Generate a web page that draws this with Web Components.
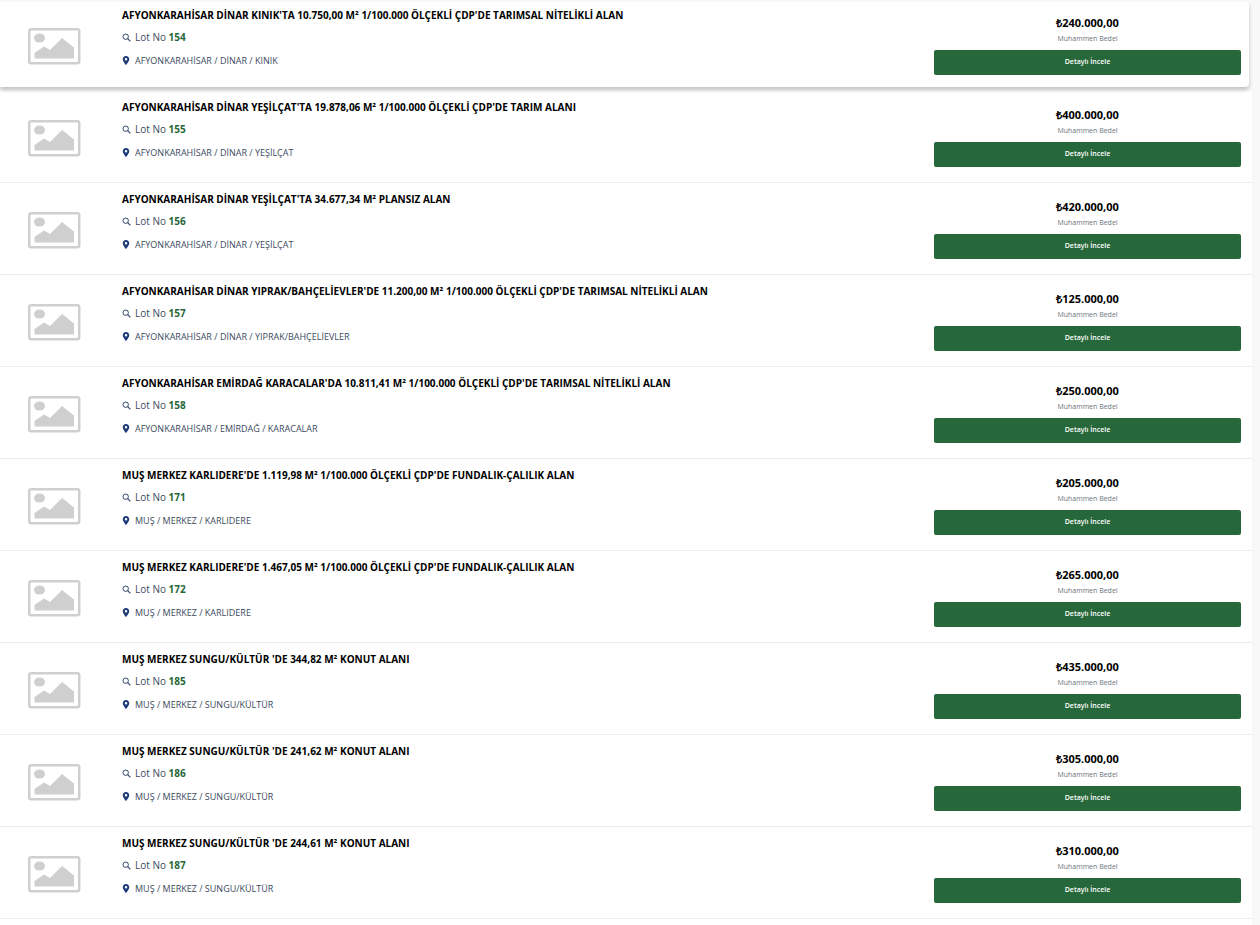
<!DOCTYPE html>
<html lang="tr">
<head>
<meta charset="utf-8">
<title>Lot listesi</title>
<style>
  html, body { margin: 0; background: #f8f8f8; height: 925px; overflow: hidden; }
  body { font-family: "Open Sans", sans-serif; }
</style>
</head>
<body>
<lot-list>
  <lot-row active lot="154" price="240.000,00" place="AFYONKARAHİSAR / DİNAR / KINIK">AFYONKARAHİSAR DİNAR KINIK'TA 10.750,00 M² 1/100.000 ÖLÇEKLİ ÇDP'DE TARIMSAL NİTELİKLİ ALAN</lot-row>
  <lot-row lot="155" price="400.000,00" place="AFYONKARAHİSAR / DİNAR / YEŞİLÇAT">AFYONKARAHİSAR DİNAR YEŞİLÇAT'TA 19.878,06 M² 1/100.000 ÖLÇEKLİ ÇDP'DE TARIM ALANI</lot-row>
  <lot-row lot="156" price="420.000,00" place="AFYONKARAHİSAR / DİNAR / YEŞİLÇAT">AFYONKARAHİSAR DİNAR YEŞİLÇAT'TA 34.677,34 M² PLANSIZ ALAN</lot-row>
  <lot-row lot="157" price="125.000,00" place="AFYONKARAHİSAR / DİNAR / YIPRAK/BAHÇELİEVLER">AFYONKARAHİSAR DİNAR YIPRAK/BAHÇELİEVLER'DE 11.200,00 M² 1/100.000 ÖLÇEKLİ ÇDP'DE TARIMSAL NİTELİKLİ ALAN</lot-row>
  <lot-row lot="158" price="250.000,00" place="AFYONKARAHİSAR / EMİRDAĞ / KARACALAR">AFYONKARAHİSAR EMİRDAĞ KARACALAR'DA 10.811,41 M² 1/100.000 ÖLÇEKLİ ÇDP'DE TARIMSAL NİTELİKLİ ALAN</lot-row>
  <lot-row lot="171" price="205.000,00" place="MUŞ / MERKEZ / KARLIDERE">MUŞ MERKEZ KARLIDERE'DE 1.119,98 M² 1/100.000 ÖLÇEKLİ ÇDP'DE FUNDALIK-ÇALILIK ALAN</lot-row>
  <lot-row lot="172" price="265.000,00" place="MUŞ / MERKEZ / KARLIDERE">MUŞ MERKEZ KARLIDERE'DE 1.467,05 M² 1/100.000 ÖLÇEKLİ ÇDP'DE FUNDALIK-ÇALILIK ALAN</lot-row>
  <lot-row lot="185" price="435.000,00" place="MUŞ / MERKEZ / SUNGU/KÜLTÜR">MUŞ MERKEZ SUNGU/KÜLTÜR 'DE 344,82 M² KONUT ALANI</lot-row>
  <lot-row lot="186" price="305.000,00" place="MUŞ / MERKEZ / SUNGU/KÜLTÜR">MUŞ MERKEZ SUNGU/KÜLTÜR 'DE 241,62 M² KONUT ALANI</lot-row>
  <lot-row lot="187" price="310.000,00" place="MUŞ / MERKEZ / SUNGU/KÜLTÜR">MUŞ MERKEZ SUNGU/KÜLTÜR 'DE 244,61 M² KONUT ALANI</lot-row>
</lot-list>
<script>
const listTemplate = document.createElement("template")
listTemplate.innerHTML = `
    <style>
        :host {
            display: block;
            width: 1252px;
            height: 925px;
            background: linear-gradient(#f8f8f8 93px, #fff 93px);
        }
        .rows {
            display: flex;
            flex-direction: column;
        }
    </style>
    <div class="rows"><slot></slot></div>
`
class LotList extends HTMLElement {
    constructor () {
        super();
        const shadow = this.attachShadow({ mode: "open" })
        shadow.append(listTemplate.content.cloneNode(true))
    }
}

const rowTemplate = document.createElement("template")
rowTemplate.innerHTML = `
    <style>
        :host {
            --lift: 0px;
            --right: 11px;
            display: block;
            box-sizing: border-box;
            height: 92px;
            flex: none;
            border-bottom: 1px solid #ececec;
            background: #fff;
        }
        /* hovered card, first row of the screenshot */
        :host([active]) {
            --lift: 3px;
            --right: 8px;
            height: 85px;
            width: 1249px;
            margin: 2px 0 4px;
            border-bottom: 0;
            border-radius: 0 0 4px 0;
            box-shadow: 0 3px 4px rgba(0,0,0,.22);
            z-index: 1;
        }
        .row {
            display: grid;
            grid-template-columns: 122px 1fr 307px;
            height: 85px;
            padding-right: var(--right);
        }
        .thumb {
            display: flex;
            justify-content: center;
            align-items: flex-start;
            padding: calc(29px - var(--lift)) 14px 0 0;
            box-sizing: border-box;
        }
        .info {
            padding-top: calc(9px - var(--lift));
            font-size: 10px;
            color: #000;
        }
        .title {
            font-weight: 700;
            line-height: 14px;
        }
        .lot {
            display: flex;
            align-items: center;
            gap: 4px;
            margin-top: 8px;
            height: 14px;
            font-size: 10px;
            color: #3b4a5e;
        }
        .lot b { color: #26683a; font-weight: 700; }
        .place {
            display: flex;
            align-items: center;
            gap: 5px;
            margin-top: 9px;
            height: 14px;
            font-size: 9px;
            color: #3b4a5e;
        }
        .side {
            display: flex;
            flex-direction: column;
            align-items: center;
            padding-top: calc(15px - var(--lift));
        }
        .price {
            font-size: 11px;
            font-weight: 700;
            line-height: 17px;
            color: #000;
        }
        .caption {
            font-size: 7px;
            line-height: 11px;
            margin-top: 2px;
            color: #6c757d;
        }
        .button {
            box-sizing: border-box;
            width: 100%;
            height: 25px;
            margin-top: 6px;
            padding-bottom: 2px;
            border-radius: 2px;
            background: #26683a;
            color: #fff;
            font-size: 7px;
            font-weight: 600;
            display: flex;
            align-items: center;
            justify-content: center;
        }
    </style>
    <div class="row">
        <div class="thumb">
            <svg width="53" height="37" viewBox="0 0 53 37">
                <rect x="1.25" y="1.25" width="50" height="34" rx="2" fill="none" stroke="#cfcfcf" stroke-width="2.5"/>
                <ellipse cx="11.5" cy="10" rx="5.5" ry="4.5" fill="#cfcfcf"/>
                <path d="M6.5 30.5 V25 L16 18.5 L22 22 L34 10 L46 19.5 V30.5 Z" fill="#cfcfcf"/>
            </svg>
        </div>
        <div class="info">
            <div class="title"><slot></slot></div>
            <div class="lot">
                <svg width="9" height="9" viewBox="0 0 9 9">
                    <circle cx="3.7" cy="3.7" r="2.7" fill="none" stroke="#33456b" stroke-width="1"/>
                    <path d="M5.7 5.7 L8.4 8.4" stroke="#33456b" stroke-width="1.2"/>
                </svg>
                <span>Lot No <b class="number"></b></span>
            </div>
            <div class="place">
                <svg width="8" height="9" viewBox="0 0 8 10">
                    <path fill-rule="evenodd" d="M4 0 C1.8 0 .4 1.6 .4 3.5 C.4 6 4 10 4 10 C4 10 7.6 6 7.6 3.5 C7.6 1.6 6.2 0 4 0 Z M4 2.2 A1.4 1.4 0 1 1 4 5 A1.4 1.4 0 1 1 4 2.2 Z" fill="#1f3a7a"/>
                </svg>
                <span class="where"></span>
            </div>
        </div>
        <div class="side">
            <div class="price"></div>
            <div class="caption">Muhammen Bedel</div>
            <div class="button">Detaylı İncele</div>
        </div>
    </div>
`
class LotRow extends HTMLElement {
    constructor () {
        super();
        const shadow = this.attachShadow({ mode: "open" })
        shadow.append(rowTemplate.content.cloneNode(true))
        shadow.querySelector(".number").textContent = this.getAttribute("lot")
        shadow.querySelector(".where").textContent = this.getAttribute("place")
        shadow.querySelector(".price").textContent = "₺" + this.getAttribute("price")
    }
}

customElements.define("lot-list", LotList);
customElements.define("lot-row", LotRow);
</script>
</body>
</html>
